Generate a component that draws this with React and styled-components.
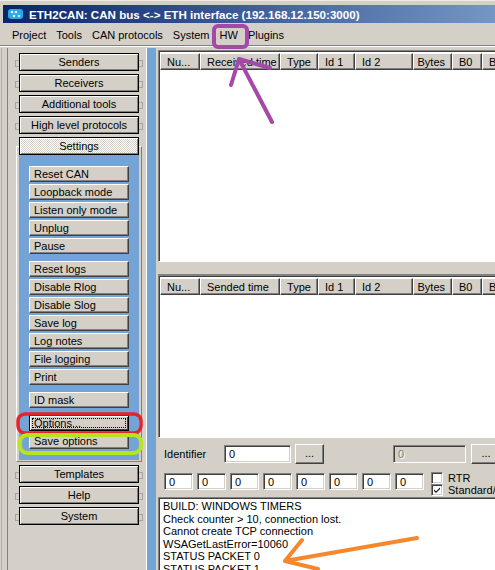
import React from "react";
import styled, { createGlobalStyle, css } from "styled-components";

const GlobalStyle = createGlobalStyle`
  html, body { margin: 0; padding: 0; background: #d4d0c8; }
  body {
    font-family: "Liberation Sans", Arial, sans-serif;
    font-size: 11px;
    color: #000;
  }
  #root { width: 495px; height: 570px; overflow: hidden; position: relative; }
  * { box-sizing: border-box; }
`;

const raised = css`
  border: 1px solid;
  border-color: #fff #404040 #404040 #fff;
  box-shadow: inset -1px -1px #808080;
`;

const sunken = css`
  border: 1px solid;
  border-color: #808080 #fff #fff #808080;
  box-shadow: inset 1px 1px #404040, inset -1px -1px #d4d0c8;
`;

const Window = styled.div`
  width: 495px;
  height: 570px;
  display: flex;
  flex-direction: column;
  background: #d4d0c8;
  overflow: hidden;
  position: relative;
  border-top: 1px solid #eeeae4;
`;

const TitleBar = styled.div`
  height: 18px;
  margin: 4px 0 1px 3px;
  display: flex;
  align-items: center;
  gap: 5px;
  padding-left: 4px;
  background: linear-gradient(to right, #0a246a, #a6caf0) 0 0 / 720px 100% no-repeat;
  color: #fff;
  font-weight: bold;
  font-size: 11.6px;
  white-space: nowrap;
`;

const MenuBar = styled.div`
  height: 22px;
  display: flex;
  align-items: center;
  padding-left: 7px;
  padding-top: 1px;
  border-bottom: 1px solid #808080;
  box-shadow: 0 1px #fff;
  margin-bottom: 2px;
`;

const MenuItem = styled.span`
  padding: 0 5px;
  white-space: nowrap;
`;

const Body = styled.div`
  flex: 1;
  display: flex;
  min-height: 0;
`;

const LeftPanel = styled.div`
  width: 146px;
  margin-left: 1px;
  padding-left: 5px;
  border-left: 1px solid #b4b0a8;
  display: flex;
  flex-shrink: 0;
`;

const LeftInner = styled.div`
  flex: 1;
  border-left: 1px solid #808080;
  border-right: 1px solid #fff;
  padding: 2px 0 0 11px;
  display: flex;
  flex-direction: column;
  align-items: flex-start;
`;

const CategoryButton = styled.div`
  position: relative;
  width: 120px;
  height: 18px;
  margin-top: 3px;
  border: 1px solid #000;
  box-shadow: inset 1px 1px #fff, inset -1px -1px #808080;
  display: flex;
  align-items: center;
  justify-content: center;
  background: ${(p) =>
    p.$active
      ? "repeating-conic-gradient(#fff 0 25%, #d4d0c8 0 50%) 0 0 / 2px 2px"
      : "#d4d0c8"};
  &::before,
  &::after {
    content: "";
    position: absolute;
    top: 6px;
    width: 3px;
    height: 5px;
    border: 1px solid #a8a49c;
    display: ${(p) => (p.$active ? "none" : "block")};
  }
  &::before { left: -5px; border-right: none; }
  &::after { right: -5px; border-left: none; }
`;

const SettingsBox = styled.div`
  width: 126px;
  margin: 12px 0 0 -3px;
  padding: 0 2px 1px;
  border: 1px solid;
  border-color: #fff #808080 #808080 #fff;
  display: flex;
  flex-direction: column;
  & > ${CategoryButton} { margin-top: -10px; }
`;

const BlueArea = styled.div`
  width: 120px;
  background: #74a4d6;
  padding: 11px 0 11px 10px;
  display: flex;
  flex-direction: column;
`;

const ToolButton = styled.div`
  position: relative;
  width: 100px;
  height: 16px;
  margin-top: ${(p) => (p.$gap ? "7px" : "2px")};
  background: #d4d0c8;
  ${raised};
  display: flex;
  align-items: center;
  padding-left: 4px;
  white-space: nowrap;
  &:first-child { margin-top: 0; }
  ${(p) =>
    p.$focused &&
    css`
      border-color: #000;
      box-shadow: inset 1px 1px #fff, inset -1px -1px #404040;
      &::after {
        content: "";
        position: absolute;
        inset: 2px;
        border: 1px dotted #000;
      }
    `}
`;

const BlueStrip = styled.div`
  width: 9px;
  flex-shrink: 0;
  background: #74a4d6;
`;

const RightPane = styled.div`
  flex: 1;
  min-width: 0;
  margin-left: 2px;
  padding-top: 2px;
  display: flex;
  flex-direction: column;
  overflow: hidden;
`;

const ListView = styled.div`
  width: 400px;
  height: ${(p) => p.$h}px;
  flex-shrink: 0;
  background: #fff;
  border-top: 1px solid #808080;
  border-left: 1px solid #808080;
  border-bottom: 1px solid #fff;
  box-shadow: inset 1px 1px #404040;
  padding: 2px 0 0 1px;
`;

const HeaderRow = styled.div`
  display: flex;
  height: 17px;
`;

const HeaderCell = styled.div`
  width: ${(p) => p.$w}px;
  flex-shrink: 0;
  background: #d4d0c8;
  ${raised};
  display: flex;
  align-items: center;
  justify-content: ${(p) =>
    p.$align === "right" ? "flex-end" : p.$align === "center" ? "center" : "flex-start"};
  padding: 0 6px;
  white-space: nowrap;
`;

const Splitter = styled.div`
  height: 13px;
  flex-shrink: 0;
  border-bottom: 1px solid #808080;
`;

const Controls = styled.div`
  padding: 6px 0 0 6px;
  display: flex;
  flex-direction: column;
  gap: 8px;
  flex-shrink: 0;
  width: 400px;
`;

const Row = styled.div`
  display: flex;
  align-items: ${(p) => (p.$top ? "flex-start" : "center")};
`;

const Label = styled.span`
  width: 60px;
  flex-shrink: 0;
`;

const Field = styled.div`
  width: ${(p) => p.$w}px;
  height: ${(p) => p.$h || 18}px;
  margin-left: ${(p) => p.$ml || 0}px;
  margin-top: ${(p) => p.$mt || 0}px;
  flex-shrink: 0;
  background: ${(p) => (p.$disabled ? "#d4d0c8" : "#fff")};
  color: ${(p) => (p.$disabled ? "#808080" : "#000")};
  text-shadow: ${(p) => (p.$disabled ? "1px 1px #fff" : "none")};
  ${sunken};
  padding-left: 4px;
  display: flex;
  align-items: center;
`;

const DotsButton = styled.div`
  width: ${(p) => p.$w}px;
  height: 20px;
  margin-left: ${(p) => p.$ml}px;
  flex-shrink: 0;
  background: #d4d0c8;
  ${raised};
  display: flex;
  align-items: center;
  justify-content: center;
  padding-bottom: 3px;
`;

const CheckColumn = styled.div`
  margin-left: 7px;
  display: flex;
  flex-direction: column;
`;

const CheckRow = styled.div`
  display: flex;
  align-items: center;
  gap: 5px;
  height: 12px;
  line-height: 11px;
`;

const CheckBox = styled.div`
  width: 12px;
  height: 12px;
  background: #fff;
  ${sunken};
  display: flex;
  align-items: center;
  justify-content: center;
`;

const Log = styled.div`
  flex: 1;
  width: 400px;
  margin-top: 1px;
  background: #fff;
  border-top: 1px solid #808080;
  border-left: 1px solid #808080;
  box-shadow: inset 1px 1px #404040;
  padding: 2px 0 0 4px;
  line-height: 12.6px;
  white-space: nowrap;
`;

const Overlay = styled.svg`
  position: absolute;
  left: 0;
  top: 0;
  pointer-events: none;
`;

const columns = [
  { w: 40 },
  { w: 80 },
  { w: 38, align: "center" },
  { w: 37 },
  { w: 58 },
  { w: 39, align: "right" },
  { w: 30 },
  { w: 30 },
];

function Header({ second }) {
  const labels = ["Nu...", second, "Type", "Id 1", "Id 2", "Bytes", "B0", "B1"];
  return (
    <HeaderRow>
      {columns.map((c, i) => (
        <HeaderCell key={i} $w={c.w} $align={c.align}>
          {labels[i]}
        </HeaderCell>
      ))}
    </HeaderRow>
  );
}

function AppIcon() {
  return (
    <svg width="17" height="14" viewBox="0 0 17 14">
      <rect x="1" y="2" width="15" height="10" rx="3" fill="#27a8e8" />
      <circle cx="5" cy="5" r="1.3" fill="#fff" />
      <circle cx="9" cy="5" r="1.3" fill="#fff" />
      <circle cx="7" cy="9" r="1.3" fill="#fff" />
      <circle cx="12" cy="9" r="1.3" fill="#bfe8ff" />
    </svg>
  );
}

const toolGroups = [
  ["Reset CAN", "Loopback mode", "Listen only mode", "Unplug", "Pause"],
  ["Reset logs", "Disable Rlog", "Disable Slog", "Save log", "Log notes", "File logging", "Print"],
  ["ID mask"],
];

export default function App() {
  return (
    <Window>
      <GlobalStyle />
      <TitleBar>
        <AppIcon />
        ETH2CAN: CAN bus &lt;-&gt; ETH interface (192.168.12.150:3000)
      </TitleBar>
      <MenuBar>
        {["Project", "Tools", "CAN protocols", "System", "HW", "Plugins"].map((m) => (
          <MenuItem key={m}>{m}</MenuItem>
        ))}
      </MenuBar>
      <Body>
        <LeftPanel>
          <LeftInner>
            <CategoryButton>Senders</CategoryButton>
            <CategoryButton>Receivers</CategoryButton>
            <CategoryButton>Additional tools</CategoryButton>
            <CategoryButton>High level protocols</CategoryButton>
            <SettingsBox>
              <CategoryButton $active>Settings</CategoryButton>
              <BlueArea>
                {toolGroups.map((g, gi) =>
                  g.map((t, i) => (
                    <ToolButton key={t} $gap={gi > 0 && i === 0}>
                      {t}
                    </ToolButton>
                  ))
                )}
                <ToolButton $gap $focused>Options...</ToolButton>
                <ToolButton>Save options</ToolButton>
              </BlueArea>
            </SettingsBox>
            <CategoryButton>Templates</CategoryButton>
            <CategoryButton>Help</CategoryButton>
            <CategoryButton>System</CategoryButton>
          </LeftInner>
        </LeftPanel>
        <BlueStrip />
        <RightPane>
          <ListView $h={212}>
            <Header second="Received time" />
          </ListView>
          <Splitter />
          <ListView $h={163}>
            <Header second="Sended time" />
          </ListView>
          <Controls>
            <Row>
              <Label>Identifier</Label>
              <Field $w={67}>0</Field>
              <DotsButton $w={29} $ml={4}>...</DotsButton>
              <Field $w={73} $ml={69} $disabled>0</Field>
              <DotsButton $w={30} $ml={5}>...</DotsButton>
            </Row>
            <Row $top>
              {Array.from({ length: 8 }).map((_, i) => (
                <Field key={i} $w={29} $h={17} $mt={1} $ml={i ? 4 : 0}>
                  0
                </Field>
              ))}
              <CheckColumn>
                <CheckRow>
                  <CheckBox />
                  RTR
                </CheckRow>
                <CheckRow>
                  <CheckBox>
                    <svg width="8" height="8" viewBox="0 0 8 8">
                      <path d="M1 3.5 L3 5.5 L7 1.5 L7 3 L3 7 L1 5 Z" fill="#000" />
                    </svg>
                  </CheckBox>
                  Standard/Extended
                </CheckRow>
              </CheckColumn>
            </Row>
          </Controls>
          <Log>
            <div>BUILD: WINDOWS TIMERS</div>
            <div>Check counter &gt; 10, connection lost.</div>
            <div>Cannot create TCP connection</div>
            <div>WSAGetLastError=10060</div>
            <div>STATUS PACKET 0</div>
            <div>STATUS PACKET 1</div>
          </Log>
        </RightPane>
      </Body>
      <Overlay width="495" height="570" viewBox="0 0 495 570">
        <g fill="none" strokeLinecap="round" strokeLinejoin="round">
          <rect x="214" y="25" width="33" height="21" rx="4" stroke="#a548a8" strokeWidth="4" />
          <path d="M272 121 L239 58 M231 84 L239 58 L270 67" stroke="#a548a8" strokeWidth="4" />
          <rect x="18" y="413" width="123" height="19" rx="7" stroke="#e3232e" strokeWidth="3.5" />
          <rect x="20" y="434" width="121" height="18" rx="7" stroke="#b7e41e" strokeWidth="4" />
          <path d="M417 537 L285 560 M302 539 L285 560 L318 568" stroke="#f5882c" strokeWidth="4" />
        </g>
      </Overlay>
    </Window>
  );
}
